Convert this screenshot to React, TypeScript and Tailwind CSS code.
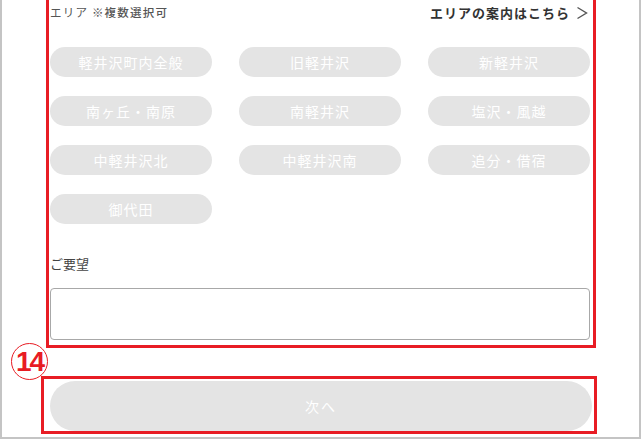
import React from "react";

const areas = [
  "軽井沢町内全般",
  "旧軽井沢",
  "新軽井沢",
  "南ヶ丘・南原",
  "南軽井沢",
  "塩沢・風越",
  "中軽井沢北",
  "中軽井沢南",
  "追分・借宿",
  "御代田",
];

export default function App() {
  return (
    <div
      className="relative w-[641px] h-[439px] bg-white border-x-2 border-b-2 border-[#c4c4c4] overflow-hidden"
      style={{ fontFamily: '"Noto Sans CJK JP", "Noto Sans", sans-serif' }}
    >
      {/* エリア選択 */}
      <div className="ml-[44px] w-[550px] border-x-[3px] border-b-[3px] border-[#e81c24] pl-[1px] pr-[3px] pb-[5px]">
        <div className="flex items-center justify-between h-[25px]">
          <span className="text-[11.5px] text-[#555] tracking-[1.2px]">
            エリア <span className="font-medium">※複数選択可</span>
          </span>
          <span className="flex items-center gap-[6px] text-[13px] font-bold text-[#333] tracking-[1px] pr-[2px]">
            エリアの案内はこちら
            <svg width="12" height="14" viewBox="0 0 12 14" className="text-[#555]">
              <path d="M1.5 1.5 L10.5 7 L1.5 12.5" fill="none" stroke="currentColor" strokeWidth="1.4" />
            </svg>
          </span>
        </div>

        <div className="grid grid-cols-3 gap-x-[27px] gap-y-[19px] mt-[22px]">
          {areas.map((a) => (
            <div
              key={a}
              className="h-[30px] rounded-full bg-[#e4e4e4] text-white text-[14px] tracking-[1px] flex items-center justify-center"
            >
              {a}
            </div>
          ))}
        </div>

        <div className="mt-[32px] text-[13px] leading-[16px] text-[#444]">ご要望</div>
        <div className="mt-[16px] h-[52px] rounded-[4px] border-[1.5px] border-[#a8a8a8] bg-white" />
      </div>

      {/* 番号 */}
      <div className="absolute left-[9px] top-[343px] w-[37px] h-[37px] rounded-full border-[1.5px] border-[#e81c24] flex items-center justify-center">
        <span
          className="text-[28px] font-bold text-[#e81c24] tracking-[-2px] leading-none"
          style={{ fontFamily: '"Liberation Sans Narrow", "Liberation Sans", sans-serif' }}
        >
          14
        </span>
      </div>

      {/* 次へ */}
      <div className="ml-[39px] mt-[28px] w-[556px] h-[58px] border-[3px] border-[#e81c24] pl-[6px] pr-[2px] pt-[2px]">
        <div className="h-[50px] rounded-full bg-[#e4e4e4] flex items-center justify-center text-white text-[14px] tracking-[2px]">
          次へ
        </div>
      </div>
    </div>
  );
}
